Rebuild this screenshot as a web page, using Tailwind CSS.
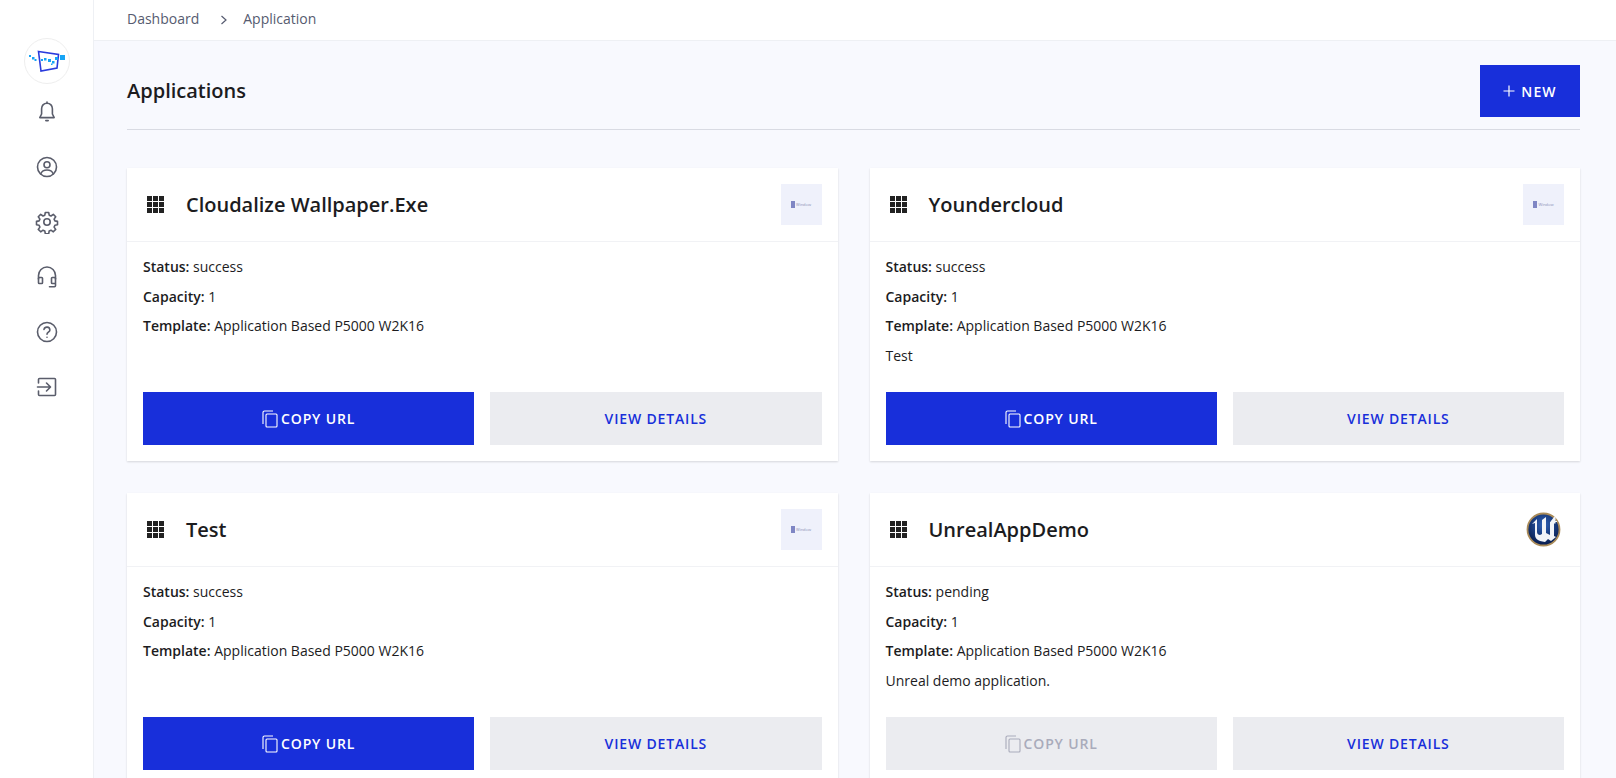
<!DOCTYPE html>
<html lang="en">
<head>
  <meta charset="UTF-8" />
  <meta name="viewport" content="width=device-width, initial-scale=1.0" />
  <script src="https://cdn.jsdelivr.net/npm/@tailwindcss/browser@4"></script>
  <title>Applications</title>
</head>
<body class="h-screen overflow-hidden bg-[#f8f9fe] font-['Open_Sans',sans-serif] text-[#1c1c1e] flex">
  <!-- sidebar -->
  <aside class="w-[94px] shrink-0 h-full bg-white border-r border-[#eef0f4] flex flex-col items-center pt-[38px] text-[#5a5d6b]">
    <div class="w-[46px] h-[46px] rounded-full border border-[#eeeeee] flex items-center justify-center">
      <svg width="40" height="24" viewBox="0 0 40 24">
        <path d="M11.5 2.5 L31.5 5.5 L30 19 L14 22 Z" fill="none" stroke="#2a3bdc" stroke-width="1.6"/>
        <g fill="#17a4f5">
          <rect x="33" y="6" width="5" height="5"/><rect x="28" y="8" width="3" height="3"/><rect x="25" y="12" width="2.5" height="2.5"/>
          <rect x="21" y="10" width="3" height="3"/><rect x="17" y="9" width="2.5" height="2.5"/><rect x="14" y="10" width="2" height="2"/>
          <rect x="5" y="8" width="2.5" height="2.5"/><rect x="7.5" y="10" width="2" height="2"/><rect x="2" y="6" width="2" height="2"/><rect x="24" y="14.5" width="1.5" height="1.5"/>
        </g>
      </svg>
    </div>
    <nav class="flex flex-col items-center gap-[31px] mt-[16px]">
      <svg class="w-6 h-6" viewBox="0 0 24 24" fill="none" stroke="currentColor" stroke-width="1.6" stroke-linecap="round" stroke-linejoin="round"><path d="M12 3.2c-3.4 0-5.4 2.6-5.4 5.6v5.2L4.8 17.6h14.4L17.4 14V8.800c0-3-2-5.600-5.400-5.600z"/><path d="M12 2v1.200M10.800 20.600h2.400"/></svg>
      <svg class="w-6 h-6" viewBox="0 0 24 24" fill="none" stroke="currentColor" stroke-width="1.6" stroke-linecap="round" stroke-linejoin="round"><circle cx="12" cy="12" r="9.500"/><circle cx="12" cy="9.800" r="3"/><path d="M5.800 18.800c1-2.600 3.400-3.800 6.200-3.800s5.200 1.200 6.200 3.800"/></svg>
      <svg class="w-6 h-6" viewBox="0 0 24 24" fill="none" stroke="currentColor" stroke-width="1.6" stroke-linecap="round" stroke-linejoin="round"><circle cx="12" cy="12" r="3.200"/><path d="M10.300 2.500h3.400l.5 2.700 1.800.8 2.300-1.600 2.400 2.400-1.600 2.300.8 1.800 2.600.5v3.400l-2.600.5-.8 1.800 1.600 2.300-2.400 2.400-2.300-1.600-1.800.8-.5 2.700h-3.400l-.5-2.700-1.800-.8-2.300 1.600-2.400-2.400 1.600-2.300-.8-1.800-2.600-.5v-3.400l2.600-.5.8-1.800-1.600-2.300 2.400-2.400 2.300 1.600 1.800-.8z"/></svg>
      <svg class="w-6 h-6" viewBox="0 0 24 24" fill="none" stroke="currentColor" stroke-width="1.6" stroke-linecap="round" stroke-linejoin="round"><path d="M3.500 14v-3.500a8.500 8.500 0 0 1 17 0V14"/><rect x="3.500" y="12.500" width="4" height="6" rx=".8"/><rect x="16.500" y="12.500" width="4" height="6" rx=".8"/><path d="M20.500 18.500v2.200a1 1 0 0 1-1 1h-5"/></svg>
      <svg class="w-6 h-6" viewBox="0 0 24 24" fill="none" stroke="currentColor" stroke-width="1.6" stroke-linecap="round" stroke-linejoin="round"><circle cx="12" cy="12" r="9.500"/><path d="M9 9.400a3 3 0 0 1 5.900.600c0 2-2.900 2.400-2.900 4.200"/><path d="M12 17.200v.1"/></svg>
      <svg class="w-6 h-6" viewBox="0 0 24 24" fill="none" stroke="currentColor" stroke-width="1.6" stroke-linecap="round" stroke-linejoin="round"><path d="M3.500 8V4.500a1 1 0 0 1 1-1h15a1 1 0 0 1 1 1v15a1 1 0 0 1-1 1h-15a1 1 0 0 1-1-1V16"/><path d="M2.500 12h12.500M11.500 8l4 4-4 4"/></svg>
    </nav>
  </aside>

  <div class="flex-1 min-w-0 flex flex-col">
    <!-- breadcrumb -->
    <div class="h-[41px] shrink-0 bg-white border-b border-[#eef0f4] flex items-center pl-[33px] pb-[3px] text-[14px] text-[#565b70]">
      <span>Dashboard</span>
      <svg class="w-[8px] h-[10px] ml-[21px] mr-[15px] mt-[3px]" viewBox="0 0 8 10" fill="none" stroke="#565b70" stroke-width="1.200"><path d="M1.500 1l4.500 4-4.500 4"/></svg>
      <span>Application</span>
    </div>

    <main class="pl-[33px] pr-[36px] flex-1 min-h-0">
      <div class="h-[89px] pt-[24px] pb-[12px] border-b border-[#d9dbe3] flex items-start justify-between">
        <h1 class="text-[20px] leading-[52px] font-semibold">Applications</h1>
        <button class="w-[100px] h-[52px] bg-[#182fda] text-white text-[14px] font-semibold tracking-[0.08em] flex items-center justify-center gap-[6px]">
          <svg class="w-[12px] h-[12px]" viewBox="0 0 12 12" stroke="currentColor" stroke-width="1.200"><path d="M6 .5v11M.5 6h11"/></svg>
          NEW
        </button>
      </div>

      <div class="grid grid-cols-2 gap-x-[32px] gap-y-[32px] mt-[38px]">
        <!-- card 1 -->
        <section class="bg-white shadow-[0_1px_2px_rgba(0,0,0,0.14)] h-[293px] flex flex-col">
          <header class="h-[74px] shrink-0 border-b border-[#f1f2f5] flex items-center pl-[20px] pr-[16px]">
            <svg class="w-[17px] h-[17px] fill-[#222222]" viewBox="0 0 17 17"><rect width="5" height="5"/><rect x="6" width="5" height="5"/><rect x="12" width="5" height="5"/><rect y="6" width="5" height="5"/><rect x="6" y="6" width="5" height="5"/><rect x="12" y="6" width="5" height="5"/><rect y="12" width="5" height="5"/><rect x="6" y="12" width="5" height="5"/><rect x="12" y="12" width="5" height="5"/></svg>
            <h2 class="ml-[22px] text-[20px] font-semibold flex-1">Cloudalize Wallpaper.Exe</h2>
            <div class="w-[41px] h-[41px] bg-[#eff1fb] flex items-center justify-center gap-[1px]"><span class="w-[4px] h-[7px] bg-[#7f86c4]"></span><span class="text-[4px] leading-none text-[#8d92b8]">Window</span></div>
          </header>
          <div class="flex-1 pl-[16px] pt-[14px] text-[14px] leading-[21px] flex flex-col gap-[8.500px]">
            <p><b class="font-semibold">Status:</b> success</p>
            <p><b class="font-semibold">Capacity:</b> 1</p>
            <p><b class="font-semibold">Template:</b> Application Based P5000 W2K16</p>
          </div>
          <div class="grid grid-cols-2 gap-[16px] px-[16px] pb-[16px]">
            <button class="h-[53px] bg-[#182fda] text-white text-[14px] font-semibold tracking-[0.06em] flex items-center justify-center gap-[3px]">
              <svg class="w-[16px] h-[18px]" viewBox="0 0 16 18" fill="none" stroke="currentColor" stroke-width="1.100"><path d="M1 14V2.500A1.500 1.500 0 0 1 2.500 1H11"/><rect x="4" y="4" width="11" height="13" rx="1"/></svg>
              COPY URL
            </button>
            <button class="h-[53px] bg-[#ebecf0] text-[#182fda] text-[14px] font-semibold tracking-[0.06em]">VIEW DETAILS</button>
          </div>
        </section>

        <!-- card 2 -->
        <section class="bg-white shadow-[0_1px_2px_rgba(0,0,0,0.14)] h-[293px] flex flex-col">
          <header class="h-[74px] shrink-0 border-b border-[#f1f2f5] flex items-center pl-[20px] pr-[16px]">
            <svg class="w-[17px] h-[17px] fill-[#222222]" viewBox="0 0 17 17"><rect width="5" height="5"/><rect x="6" width="5" height="5"/><rect x="12" width="5" height="5"/><rect y="6" width="5" height="5"/><rect x="6" y="6" width="5" height="5"/><rect x="12" y="6" width="5" height="5"/><rect y="12" width="5" height="5"/><rect x="6" y="12" width="5" height="5"/><rect x="12" y="12" width="5" height="5"/></svg>
            <h2 class="ml-[22px] text-[20px] font-semibold flex-1">Youndercloud</h2>
            <div class="w-[41px] h-[41px] bg-[#eff1fb] flex items-center justify-center gap-[1px]"><span class="w-[4px] h-[7px] bg-[#7f86c4]"></span><span class="text-[4px] leading-none text-[#8d92b8]">Window</span></div>
          </header>
          <div class="flex-1 pl-[16px] pt-[14px] text-[14px] leading-[21px] flex flex-col gap-[8.500px]">
            <p><b class="font-semibold">Status:</b> success</p>
            <p><b class="font-semibold">Capacity:</b> 1</p>
            <p><b class="font-semibold">Template:</b> Application Based P5000 W2K16</p>
            <p>Test</p>
          </div>
          <div class="grid grid-cols-2 gap-[16px] px-[16px] pb-[16px]">
            <button class="h-[53px] bg-[#182fda] text-white text-[14px] font-semibold tracking-[0.06em] flex items-center justify-center gap-[3px]">
              <svg class="w-[16px] h-[18px]" viewBox="0 0 16 18" fill="none" stroke="currentColor" stroke-width="1.100"><path d="M1 14V2.500A1.500 1.500 0 0 1 2.500 1H11"/><rect x="4" y="4" width="11" height="13" rx="1"/></svg>
              COPY URL
            </button>
            <button class="h-[53px] bg-[#ebecf0] text-[#182fda] text-[14px] font-semibold tracking-[0.06em]">VIEW DETAILS</button>
          </div>
        </section>

        <!-- card 3 -->
        <section class="bg-white shadow-[0_1px_2px_rgba(0,0,0,0.14)] h-[293px] flex flex-col">
          <header class="h-[74px] shrink-0 border-b border-[#f1f2f5] flex items-center pl-[20px] pr-[16px]">
            <svg class="w-[17px] h-[17px] fill-[#222222]" viewBox="0 0 17 17"><rect width="5" height="5"/><rect x="6" width="5" height="5"/><rect x="12" width="5" height="5"/><rect y="6" width="5" height="5"/><rect x="6" y="6" width="5" height="5"/><rect x="12" y="6" width="5" height="5"/><rect y="12" width="5" height="5"/><rect x="6" y="12" width="5" height="5"/><rect x="12" y="12" width="5" height="5"/></svg>
            <h2 class="ml-[22px] text-[20px] font-semibold flex-1">Test</h2>
            <div class="w-[41px] h-[41px] bg-[#eff1fb] flex items-center justify-center gap-[1px]"><span class="w-[4px] h-[7px] bg-[#7f86c4]"></span><span class="text-[4px] leading-none text-[#8d92b8]">Window</span></div>
          </header>
          <div class="flex-1 pl-[16px] pt-[14px] text-[14px] leading-[21px] flex flex-col gap-[8.500px]">
            <p><b class="font-semibold">Status:</b> success</p>
            <p><b class="font-semibold">Capacity:</b> 1</p>
            <p><b class="font-semibold">Template:</b> Application Based P5000 W2K16</p>
          </div>
          <div class="grid grid-cols-2 gap-[16px] px-[16px] pb-[16px]">
            <button class="h-[53px] bg-[#182fda] text-white text-[14px] font-semibold tracking-[0.06em] flex items-center justify-center gap-[3px]">
              <svg class="w-[16px] h-[18px]" viewBox="0 0 16 18" fill="none" stroke="currentColor" stroke-width="1.100"><path d="M1 14V2.500A1.500 1.500 0 0 1 2.500 1H11"/><rect x="4" y="4" width="11" height="13" rx="1"/></svg>
              COPY URL
            </button>
            <button class="h-[53px] bg-[#ebecf0] text-[#182fda] text-[14px] font-semibold tracking-[0.06em]">VIEW DETAILS</button>
          </div>
        </section>

        <!-- card 4 -->
        <section class="bg-white shadow-[0_1px_2px_rgba(0,0,0,0.14)] h-[293px] flex flex-col">
          <header class="h-[74px] shrink-0 border-b border-[#f1f2f5] flex items-center pl-[20px] pr-[16px]">
            <svg class="w-[17px] h-[17px] fill-[#222222]" viewBox="0 0 17 17"><rect width="5" height="5"/><rect x="6" width="5" height="5"/><rect x="12" width="5" height="5"/><rect y="6" width="5" height="5"/><rect x="6" y="6" width="5" height="5"/><rect x="12" y="6" width="5" height="5"/><rect y="12" width="5" height="5"/><rect x="6" y="12" width="5" height="5"/><rect x="12" y="12" width="5" height="5"/></svg>
            <h2 class="ml-[22px] text-[20px] font-semibold flex-1">UnrealAppDemo</h2>
            <svg class="w-[41px] h-[41px]" viewBox="0 0 41 41">
              <defs><radialGradient id="ue" cx="50%" cy="35%" r="65%"><stop offset="0" stop-color="#2f62b8"/><stop offset="1" stop-color="#061a4a"/></radialGradient></defs>
              <circle cx="20.500" cy="20.500" r="16" fill="url(#ue)" stroke="#a98a58" stroke-width="1.800"/>
              <path d="M9 15l5-5v13c0 2 1.500 3 3 3l2-1V11l4-3v16l4 2V13l4-3v17l2 1-5 4-3-2-3 3-5-1c-3-1-5-3-5-6V14z" fill="#f2f4f8"/>
              <path d="M31 8h1.500v4H34v1h-1.500v1.500H31V13h-3v-1z" fill="#f2f4f8"/>
            </svg>
          </header>
          <div class="flex-1 pl-[16px] pt-[14px] text-[14px] leading-[21px] flex flex-col gap-[8.500px]">
            <p><b class="font-semibold">Status:</b> pending</p>
            <p><b class="font-semibold">Capacity:</b> 1</p>
            <p><b class="font-semibold">Template:</b> Application Based P5000 W2K16</p>
            <p>Unreal demo application.</p>
          </div>
          <div class="grid grid-cols-2 gap-[16px] px-[16px] pb-[16px]">
            <button class="h-[53px] bg-[#ebecf0] text-[#a9abbb] text-[14px] font-semibold tracking-[0.06em] flex items-center justify-center gap-[3px]">
              <svg class="w-[16px] h-[18px]" viewBox="0 0 16 18" fill="none" stroke="currentColor" stroke-width="1.100"><path d="M1 14V2.500A1.500 1.500 0 0 1 2.500 1H11"/><rect x="4" y="4" width="11" height="13" rx="1"/></svg>
              COPY URL
            </button>
            <button class="h-[53px] bg-[#ebecf0] text-[#182fda] text-[14px] font-semibold tracking-[0.06em]">VIEW DETAILS</button>
          </div>
        </section>
      </div>
    </main>
  </div>
</body>
</html>
